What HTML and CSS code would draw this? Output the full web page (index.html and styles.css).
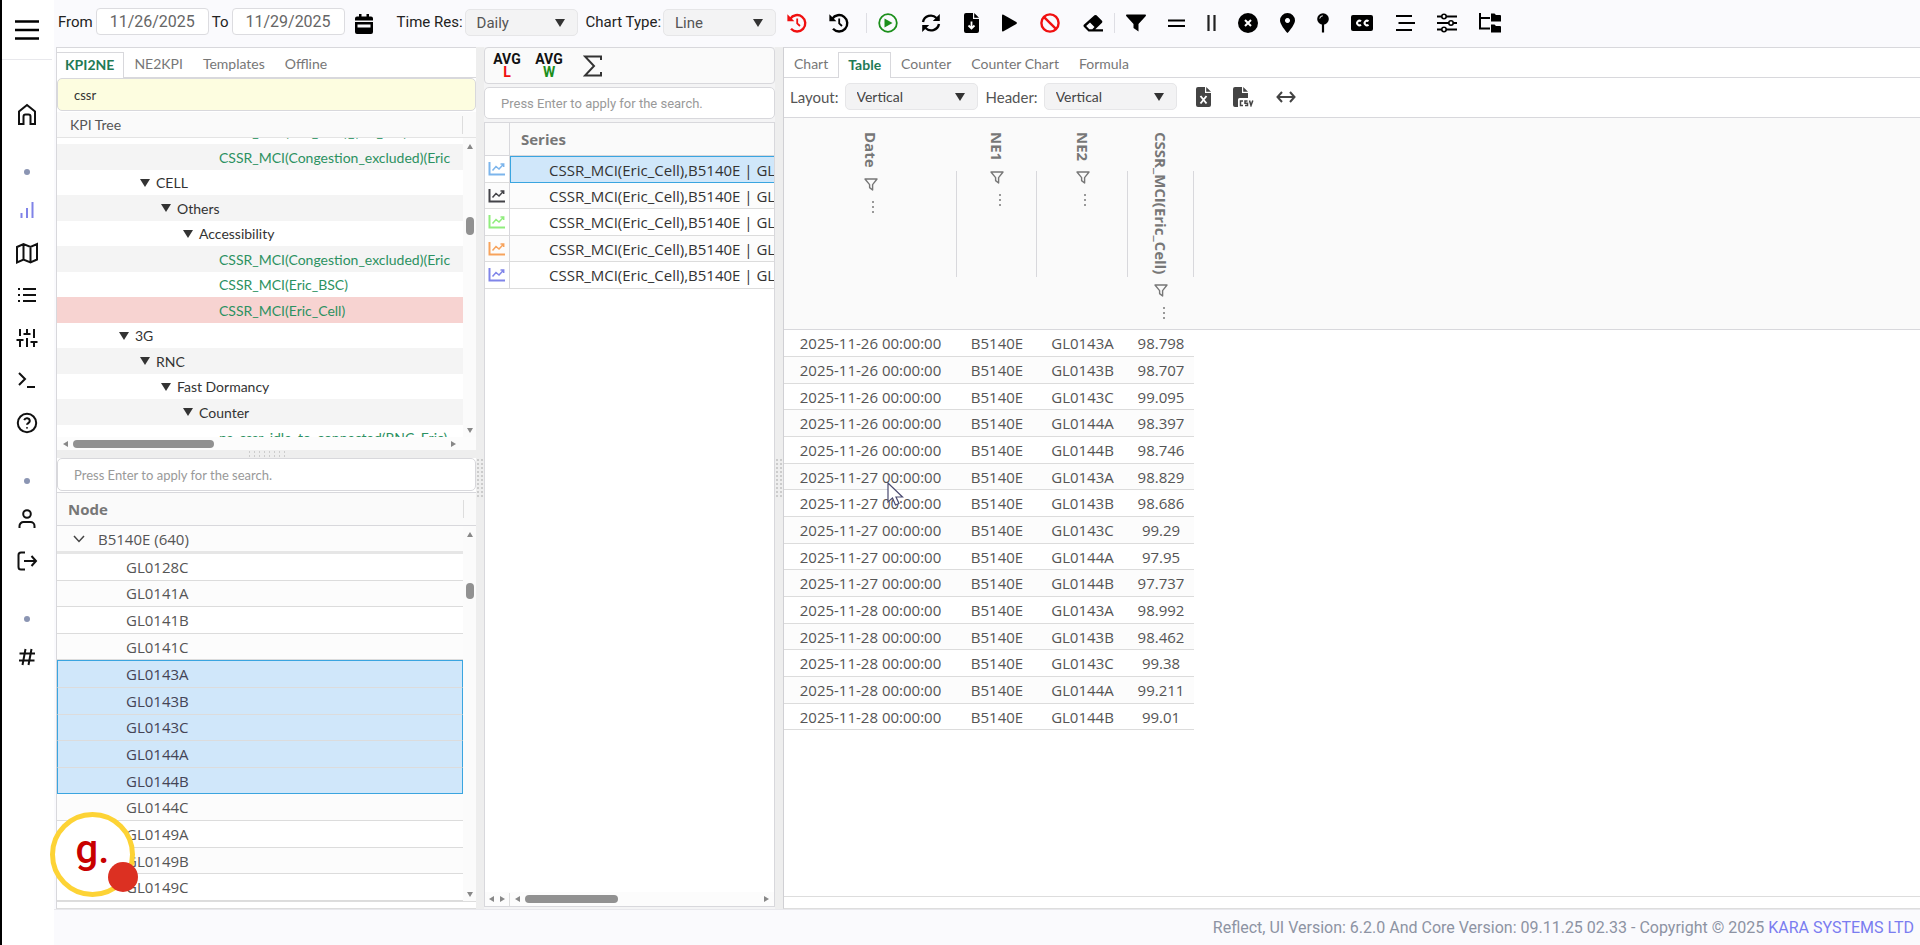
FILE: index.html
```html
<!DOCTYPE html>
<html lang="en">
<head>
<meta charset="utf-8">
<title>Reflect</title>
<link rel="stylesheet" href="styles.css">
</head>
<body>
<svg class="defs" aria-hidden="true">
  <symbol id="history" viewBox="0 0 20 20"><path d="M3.2 5.8A8.2 8.2 0 1 1 4 15.8" fill="none" stroke="currentColor" stroke-width="2.4"/><path d="M.4 1.2V8.2H7.4Z" fill="currentColor"/><path d="M10.2 5.4V10.4L13 13" fill="none" stroke="currentColor" stroke-width="1.8"/></symbol>
  <symbol id="chart" viewBox="0 0 18 16"><path d="M1.5 1V13.5H17" fill="none" stroke="currentColor" stroke-width="2"/><path d="M4.500 9.500L8 5.500L11 8L15.500 3.200M12.500 3H15.700V6" fill="none" stroke="currentColor" stroke-width="1.500"/></symbol>
  <symbol id="funnel" viewBox="0 0 14 13"><path d="M1 1H13L8.6 6.6V12L5.6 9.6V6.6Z" fill="none" stroke="currentColor" stroke-width="1.4" stroke-linejoin="round"/></symbol>
  <symbol id="file" viewBox="0 0 15 20"><path d="M2 0H9V6H15V18A2 2 0 0 1 13 20H2A2 2 0 0 1 0 18V2A2 2 0 0 1 2 0ZM10.2 0L15 4.8H10.2Z" fill="currentColor"/></symbol>
</svg>
<div class="app">
  <nav class="side" aria-label="Main">
    <button class="menu" aria-label="Menu"><svg width="24" height="20" viewBox="0 0 24 20"><path d="M0 1.5H24M0 10H24M0 18.5H24" stroke="#000" stroke-width="2.4"/></svg></button>
    <a class="item first" href="#" aria-label="Home"><svg width="24" height="24" viewBox="0 0 24 24"><path d="M4 22V9.5L12 3L20 9.5V22H15.5V14.5A2 2 0 0 0 13.5 12.5H10.5A2 2 0 0 0 8.5 14.5V22Z"/></svg></a>
    <span class="dot"></span>
    <div class="items">
      <a class="item active" href="#" aria-label="Charts"><svg width="24" height="24" viewBox="0 0 24 24"><path d="M6.5 15V20M12 10V20M17.5 4V20"/></svg></a>
      <a class="item" href="#" aria-label="Map"><svg width="24" height="24" viewBox="0 0 24 24"><path d="M2 6L8.5 3L15.5 6L22 3V18.5L15.5 21.5L8.5 18.5L2 21.5ZM8.5 3V18.5M15.5 6V21.5"/></svg></a>
      <a class="item" href="#" aria-label="List"><svg width="24" height="24" viewBox="0 0 24 24"><path d="M8 6H21M8 12H21M8 18H21M3 6H5M3 12H5M3 18H5"/></svg></a>
      <a class="item" href="#" aria-label="Settings"><svg width="24" height="24" viewBox="0 0 24 24"><path d="M5 3V10M5 14V21M12 3V8M12 12V21M19 3V12M19 16V21M1.5 14H8.5M8.5 8H15.5M15.5 16H22.5"/></svg></a>
      <a class="item" href="#" aria-label="Terminal"><svg width="24" height="24" viewBox="0 0 24 24"><path d="M4 5L10 11L4 17M12 19H20"/></svg></a>
      <a class="item" href="#" aria-label="Help"><svg width="24" height="24" viewBox="0 0 24 24"><circle cx="12" cy="12" r="9.2"/><path d="M9.2 9.2A2.9 2.9 0 0 1 14.8 10C14.8 12 12 12.2 12 13.8M12 16.2V17.4"/></svg></a>
    </div>
    <span class="dot"></span>
    <a class="item" href="#" aria-label="User"><svg width="24" height="24" viewBox="0 0 24 24"><circle cx="12" cy="7" r="3.8"/><path d="M4.5 21V19A4 4 0 0 1 8.5 15H15.5A4 4 0 0 1 19.500 19V21"/></svg></a>
    <a class="item" href="#" aria-label="Log out"><svg width="24" height="24" viewBox="0 0 24 24"><path d="M10 3.500H6A2.500 2.500 0 0 0 3.500 6V18A2.500 2.500 0 0 0 6 20.500H10M9 12H21M16.500 7L21 12L16.500 17"/></svg></a>
    <span class="dot"></span>
    <a class="item" href="#" aria-label="Channels"><svg width="24" height="24" viewBox="0 0 24 24"><path d="M4.500 8.500H20M4 15.500H19.500M10.500 4L7.500 20M16.500 4L13.500 20"/></svg></a>
  </nav>

  <div class="page">
    <header class="top">
      <label for="from">From</label><input id="from" class="date" value="11/26/2025">
      <label for="to">To</label><input id="to" class="date" value="11/29/2025">
      <button class="cal" aria-label="Calendar"><svg width="18" height="20" viewBox="0 0 18 20"><path d="M2 2.500H4V0H6.500V2.500H11.500V0H14V2.500H16A2 2 0 0 1 18 4.500V6.500H0V4.500A2 2 0 0 1 2 2.500ZM0 8H18V18A2 2 0 0 1 16 20H2A2 2 0 0 1 0 18ZM2.500 10.500V13.500H15.500V10.500Z" fill-rule="evenodd"/></svg></button>
      <label for="res">Time Res:</label><span class="pick wide"><select id="res"><option>Daily</option></select><i></i></span>
      <label class="ct" for="type">Chart Type:</label><span class="pick wide"><select id="type"><option>Line</option></select><i></i></span>
      <div class="tools hist">
        <button class="red" aria-label="Reset history"><svg width="20" height="20"><use href="#history"/></svg></button>
        <button aria-label="History"><svg width="20" height="20"><use href="#history"/></svg></button>
      </div>
      <div class="tools run">
        <button class="green" aria-label="Run"><svg width="20" height="20" viewBox="0 0 20 20"><circle cx="10" cy="10" r="8.800" fill="none" stroke="currentColor" stroke-width="1.800"/><path d="M6.500 5.500L14.500 10L6.500 14.500Z"/></svg></button>
        <button aria-label="Refresh"><svg width="20" height="20" viewBox="0 0 20 20"><path d="M2 9A8 8 0 0 1 15.500 5M18 11A8 8 0 0 1 4.500 15" fill="none" stroke="currentColor" stroke-width="2.400"/><path d="M18.800 1V8H11.800ZM1.200 19V12H8.200Z"/></svg></button>
        <button aria-label="Download"><svg width="15" height="20" viewBox="0 0 15 20"><use href="#file"/><path d="M7.500 8.500V15M4.500 12.500L7.500 15.500L10.500 12.500" fill="none" stroke="#fff" stroke-width="1.800"/></svg></button>
        <button aria-label="Play"><svg width="15" height="20" viewBox="0 0 15 20"><path d="M0 2.500Q0 1 1.500 1.800L14.300 9Q15.500 10 14.300 11L1.500 18.200Q0 19 0 17.500Z"/></svg></button>
        <button class="red" aria-label="Stop"><svg width="20" height="20" viewBox="0 0 20 20"><path d="M3.800 3.800L16.200 16.200" stroke="currentColor" stroke-width="2.400"/><circle cx="10" cy="10" r="8.600" fill="none" stroke="currentColor" stroke-width="2.400"/></svg></button>
        <button aria-label="Erase"><svg width="20" height="20" viewBox="0 0 20 20"><path d="M11.500 2.300Q12.500 1.500 13.500 2.300L19 7.800Q19.800 8.800 19 9.800L12.300 16.200H20V18.500H5.500L.8 13.800Q0 12.800.8 11.800ZM7 9.500L3.200 13L6.300 16.200H9.300L11.500 14Z" fill-rule="evenodd"/></svg></button>
      </div>
      <div class="tools view">
        <button aria-label="Filter"><svg width="20" height="20" viewBox="0 0 20 20"><path d="M.8 1.500H19.200Q20.500 1.800 19.600 3.200L12.500 11V18.500L7.500 15V11L.4 3.200Q-.5 1.800.8 1.500Z"/></svg></button>
        <button aria-label="Rows"><svg width="17" height="20" viewBox="0 0 17 20"><path d="M0 7.500H17M0 13H17" stroke="#000" stroke-width="2.200"/></svg></button>
        <button aria-label="Columns"><svg width="9" height="20" viewBox="0 0 9 20"><path d="M1.500 2V18M7.500 2V18" stroke="#222" stroke-width="2.200"/></svg></button>
        <button aria-label="Clear"><svg width="20" height="20" viewBox="0 0 20 20"><circle cx="10" cy="10" r="10"/><path d="M7 7L13 13M13 7L7 13" stroke="#fff" stroke-width="2"/></svg></button>
        <button aria-label="Location"><svg width="15" height="20" viewBox="0 0 15 20"><path d="M7.500 0A7.500 7.500 0 0 1 15 7.500C15 11 10 17.500 7.500 20C5 17.500 0 11 0 7.500A7.500 7.500 0 0 1 7.500 0ZM7.500 5A2.500 2.500 0 1 0 7.510 5Z" fill-rule="evenodd"/></svg></button>
        <button aria-label="Pin"><svg width="12" height="20" viewBox="0 0 12 20"><circle cx="6" cy="6" r="5.800"/><path d="M6 11V19.500" stroke="#000" stroke-width="2.200"/><path d="M2.800 5.500A3 3 0 0 1 5.800 2.800" fill="none" stroke="#fff"/></svg></button>
        <button aria-label="Captions"><svg width="22" height="20" viewBox="0 0 22 20"><rect y="2" width="22" height="16" rx="2"/><path d="M10 8.300A2.300 2.300 0 1 0 10 11.700M17.500 8.300A2.300 2.300 0 1 0 17.500 11.700" fill="none" stroke="#fff" stroke-width="2"/></svg></button>
        <button aria-label="Align"><svg width="20" height="20" viewBox="0 0 20 20"><path d="M1 3H17M3.500 10H20M1 17H17" stroke="#000" stroke-width="2.200"/></svg></button>
        <button aria-label="Sliders"><svg width="20" height="20" viewBox="0 0 20 20"><path d="M0 3.500H20M0 10H20M0 16.500H20" stroke="#000" stroke-width="2"/><g fill="#fff" stroke="#000" stroke-width="1.600"><circle cx="7" cy="3.500" r="2.200"/><circle cx="14" cy="10" r="2.200"/><circle cx="7" cy="16.500" r="2.200"/></g></svg></button>
        <button aria-label="Tree"><svg width="22" height="20" viewBox="0 0 22 20"><path d="M1 0V15.500H11M1 5H11" fill="none" stroke="#000" stroke-width="2"/><path d="M12 .5H15.500L17 2H21Q22 2 22 3V8.500H12ZM12 11.500H15.500L17 13H21Q22 13 22 14V19.500H12Z"/></svg></button>
      </div>
    </header>

    <main class="work">
      <section class="left">
        <div class="tabs" role="tablist">
          <button class="tab on" role="tab">KPI2NE</button><button class="tab" role="tab">NE2KPI</button><button class="tab" role="tab">Templates</button><button class="tab" role="tab">Offline</button>
        </div>
        <input class="search kpi" aria-label="KPI search" value="cssr">
        <div class="treehead"><span>KPI Tree</span></div>
        <div class="treebox">
          <ul class="tree">
            <li class="leaf cut">CSSR_MCI(Eric_BSC)_(2G_cell)</li>
            <li class="leaf">CSSR_MCI(Congestion_excluded)(Eric</li>
            <li class="l2"><i></i>CELL</li>
            <li class="l3"><i></i>Others</li>
            <li class="l4"><i></i>Accessibility</li>
            <li class="leaf">CSSR_MCI(Congestion_excluded)(Eric</li>
            <li class="leaf">CSSR_MCI(Eric_BSC)</li>
            <li class="leaf picked">CSSR_MCI(Eric_Cell)</li>
            <li class="l1"><i></i>3G</li>
            <li class="l2"><i></i>RNC</li>
            <li class="l3"><i></i>Fast Dormancy</li>
            <li class="l4"><i></i>Counter</li>
            <li class="leaf">ps_cssr_idle_to_connected(RNC_Eric)</li>
          </ul>
          <div class="vbar"><b class="up"></b><b class="thumb a"></b><b class="down"></b></div>
        </div>
        <div class="hbar"><b class="lt"></b><b class="thumb h1"></b><b class="rt"></b></div>
        <div class="split"><span class="grip"></span></div>
        <input class="search" aria-label="Node search" placeholder="Press Enter to apply for the search.">
        <div class="nodehead"><span>Node</span></div>
        <div class="nodebox">
          <div class="nodes">
            <div class="group"><svg width="12" height="8" viewBox="0 0 12 8"><path d="M1 1L6 6.500L11 1" fill="none" stroke="#444" stroke-width="1.500"/></svg>B5140E (640)</div>
            <ul class="list">
              <li>GL0128C</li><li>GL0141A</li><li>GL0141B</li><li>GL0141C</li>
              <li class="sel start">GL0143A</li><li class="sel">GL0143B</li><li class="sel">GL0143C</li><li class="sel">GL0144A</li><li class="sel end">GL0144B</li>
              <li>GL0144C</li><li>GL0149A</li><li>GL0149B</li><li>GL0149C</li>
            </ul>
          </div>
          <div class="vbar"><b class="up"></b><b class="thumb b"></b><b class="down"></b></div>
        </div>
      </section>
      <div class="gutter"><span class="vgrip"></span></div>
      <section class="mid">
        <div class="avgs">
          <button class="avg">AVG<em class="red">L</em></button>
          <button class="avg">AVG<em class="green">W</em></button>
          <button class="sum" aria-label="Sum"><svg width="20" height="22" viewBox="0 0 20 22"><path d="M18 5V1.500H2L11 11L2 20.500H18V17" fill="none" stroke="#333" stroke-width="2"/></svg></button>
        </div>
        <input class="search" aria-label="Series search" placeholder="Press Enter to apply for the search.">
        <div class="seriesbox">
          <table class="series">
            <thead><tr><th class="ic"></th><th>Series</th></tr></thead>
            <tbody>
              <tr><td class="ic c1"><svg width="18" height="16"><use href="#chart"/></svg></td><td class="cur">CSSR_MCI(Eric_Cell),B5140E | GL</td></tr>
              <tr><td class="ic c2"><svg width="18" height="16"><use href="#chart"/></svg></td><td>CSSR_MCI(Eric_Cell),B5140E | GL</td></tr>
              <tr><td class="ic c3"><svg width="18" height="16"><use href="#chart"/></svg></td><td>CSSR_MCI(Eric_Cell),B5140E | GL</td></tr>
              <tr><td class="ic c4"><svg width="18" height="16"><use href="#chart"/></svg></td><td>CSSR_MCI(Eric_Cell),B5140E | GL</td></tr>
              <tr><td class="ic c5"><svg width="18" height="16"><use href="#chart"/></svg></td><td>CSSR_MCI(Eric_Cell),B5140E | GL</td></tr>
            </tbody>
          </table>
          <div class="hbar foot"><span class="mini"><b class="lt"></b><b class="rt"></b></span><b class="lt"></b><b class="thumb h2"></b><b class="rt"></b></div>
        </div>
      </section>
      <div class="gutter"><span class="vgrip"></span></div>
      <section class="right">
        <div class="tabs" role="tablist">
          <button class="tab" role="tab">Chart</button><button class="tab on" role="tab">Table</button><button class="tab" role="tab">Counter</button><button class="tab" role="tab">Counter Chart</button><button class="tab" role="tab">Formula</button>
        </div>
        <div class="opts">
          <label for="layout">Layout:</label><span class="pick"><select id="layout"><option>Vertical</option></select><i></i></span>
          <label class="hd" for="head">Header:</label><span class="pick"><select id="head"><option>Vertical</option></select><i></i></span>
          <button class="xl" aria-label="Export Excel"><svg width="15" height="20" viewBox="0 0 15 20"><use href="#file"/><path d="M4.500 9L10.500 16.500M10.500 9L4.500 16.500" stroke="#fff" stroke-width="1.900"/></svg></button>
          <button class="csv" aria-label="Export CSV"><svg width="21" height="20" viewBox="0 0 21 20"><path d="M2 0H9V6H15V11H6.500Q5 11 5 12.500V20H2A2 2 0 0 1 0 18V2A2 2 0 0 1 2 0ZM10.200 0L15 4.800H10.200Z"/><path d="M10 14H7.500V18.500H10M14.500 14H12V16.200H14.500V18.500H12M16.500 13.500L18 18.500L19.800 13.500" fill="none" stroke="currentColor" stroke-width="1.500"/></svg></button>
          <button class="fit" aria-label="Fit width"><svg width="20" height="12" viewBox="0 0 20 12"><path d="M1.500 6H18.500M6 1L1.500 6L6 11M14 1L18.500 6L14 11" fill="none" stroke="currentColor" stroke-width="2"/></svg></button>
        </div>
        <div class="gridbox">
          <table class="data">
            <colgroup><col class="w1"><col class="w2"><col class="w3"><col class="w4"><col></colgroup>
            <thead><tr>
              <th><div><span>Date</span><svg width="14" height="13"><use href="#funnel"/></svg><u></u></div></th>
              <th><div><span>NE1</span><svg width="14" height="13"><use href="#funnel"/></svg><u></u></div></th>
              <th><div><span>NE2</span><svg width="14" height="13"><use href="#funnel"/></svg><u></u></div></th>
              <th><div><span>CSSR_MCI(Eric_Cell)</span><svg width="14" height="13"><use href="#funnel"/></svg><u></u></div></th>
              <td></td>
            </tr></thead>
            <tbody>
              <tr><td>2025-11-26 00:00:00</td><td>B5140E</td><td>GL0143A</td><td>98.798</td></tr>
              <tr><td>2025-11-26 00:00:00</td><td>B5140E</td><td>GL0143B</td><td>98.707</td></tr>
              <tr><td>2025-11-26 00:00:00</td><td>B5140E</td><td>GL0143C</td><td>99.095</td></tr>
              <tr><td>2025-11-26 00:00:00</td><td>B5140E</td><td>GL0144A</td><td>98.397</td></tr>
              <tr><td>2025-11-26 00:00:00</td><td>B5140E</td><td>GL0144B</td><td>98.746</td></tr>
              <tr><td>2025-11-27 00:00:00</td><td>B5140E</td><td>GL0143A</td><td>98.829</td></tr>
              <tr><td>2025-11-27 00:00:00</td><td>B5140E</td><td>GL0143B</td><td>98.686</td></tr>
              <tr><td>2025-11-27 00:00:00</td><td>B5140E</td><td>GL0143C</td><td>99.29</td></tr>
              <tr><td>2025-11-27 00:00:00</td><td>B5140E</td><td>GL0144A</td><td>97.95</td></tr>
              <tr><td>2025-11-27 00:00:00</td><td>B5140E</td><td>GL0144B</td><td>97.737</td></tr>
              <tr><td>2025-11-28 00:00:00</td><td>B5140E</td><td>GL0143A</td><td>98.992</td></tr>
              <tr><td>2025-11-28 00:00:00</td><td>B5140E</td><td>GL0143B</td><td>98.462</td></tr>
              <tr><td>2025-11-28 00:00:00</td><td>B5140E</td><td>GL0143C</td><td>99.38</td></tr>
              <tr><td>2025-11-28 00:00:00</td><td>B5140E</td><td>GL0144A</td><td>99.211</td></tr>
              <tr><td>2025-11-28 00:00:00</td><td>B5140E</td><td>GL0144B</td><td>99.01</td></tr>
            </tbody>
          </table>
        </div>
      </section>
    </main>
    <footer class="bottom">Reflect, UI Version: 6.2.0 And Core Version: 09.11.25 02.33 - Copyright © 2025&nbsp;<a href="#">KARA SYSTEMS LTD</a></footer>
  </div>
</div>
<div class="badge">g.<span></span></div>
<svg class="cursor" width="18" height="26" viewBox="0 0 18 26"><path d="M1 1V20L5.500 16L8.500 23L12 21.500L9 15H15.500Z" fill="#fff" stroke="#4a4a70" stroke-width="1.200"/></svg>
</body>
</html>
```
FILE: styles.css
```css
* { box-sizing: border-box; }
body { margin: 0; height: 100vh; overflow: hidden; background: #fafafd; font-family: "Open Sans", "Noto Sans", sans-serif; font-size: 15px; color: #555; }
button { border: 0; background: none; padding: 0; font: inherit; color: inherit; display: flex; align-items: center; justify-content: center; }
input, select { font: inherit; color: inherit; min-width: 0; }
ul { list-style: none; margin: 0; padding: 0; }
svg { display: block; flex: none; fill: currentColor; }
.defs { position: absolute; width: 0; height: 0; }
.app { display: flex; height: 100%; }

.side { width: 54px; flex: none; background: #fff; border-left: 2px solid #000; padding-right: 2px; display: flex; flex-direction: column; color: #111; }
.menu { height: 60px; flex: none; border-bottom: 1px solid #e8e8ec; }
.item { height: 42px; display: flex; align-items: center; justify-content: center; color: inherit; }
.item svg { fill: none; stroke: currentColor; stroke-width: 2; }
.first { margin-top: 33px; }
.items { height: 255px; display: flex; flex-direction: column; }
.items .item { flex: 1; height: auto; }
.item.active { color: #8083e8; }
.dot { height: 54px; padding-top: 20px; display: flex; align-items: center; justify-content: center; }
.dot::before { content: ""; width: 6px; height: 6px; border-radius: 50%; background: #8b95b3; }

.page { flex: 1; min-width: 0; display: flex; flex-direction: column; }
.top { height: 47px; flex: none; display: flex; align-items: center; padding: 0 0 4px 4px; font-family: Roboto, sans-serif; color: #222; white-space: nowrap; }
.date { width: 113px; height: 27px; margin: 0 3px; border: 1px solid #dcdce0; border-radius: 4px; background: #fff; text-align: center; color: #666; padding: 0; font-size: 16px; }
.cal { margin: 4px 24px 0 7px; color: #000; }
.pick { display: grid; width: 133px; height: 27px; margin-left: 4px; }
.pick.wide { width: 113px; margin: 2px 0 0 2px; color: #555; }
.pick > * { grid-area: 1 / 1; }
.pick select { appearance: none; border: 1px solid #e6e6e8; border-radius: 5px; background: #f3f3f4; padding: 0 11px; width: 100%; }
.pick i { justify-self: end; align-self: center; margin-right: 13px; border: 5px solid transparent; border-top: 8px solid #333; border-bottom: 0; pointer-events: none; }
.ct { margin-left: 8px; }
.tools { display: flex; gap: 22px; height: 20px; color: #000; }
.hist { margin-left: 11px; padding-right: 17px; }
.run, .view { border-left: 1px solid #dedee4; padding: 0 11px; }
.run { gap: 23px; }
.run, .view, .hist { margin-top: 3px; }
.red { color: #f01010; }
.green { color: #1b8f1b; }

.work { flex: 1; min-height: 0; display: flex; padding-left: 2px; }
.left, .mid, .right { display: flex; flex-direction: column; min-width: 0; border-top: 1px solid #d8d8dc; background: #fff; }
.left { width: 420px; flex: none; border-left: 1px solid #d8d8dc; border-bottom: 1px solid #ddd; }
.right { flex: 1; border-left: 1px solid #d0d0d4; border-bottom: 1px solid #ddd; }
.mid { width: 291px; flex: none; background: #f4f4f5; border: 0; gap: 3px; }
.gutter { width: 8px; flex: none; background: #eee; display: flex; align-items: center; justify-content: center; }
.vgrip { width: 8px; height: 40px; background: radial-gradient(circle, #ccc 1px, transparent 1px) 0 0 / 4px 4px; }

.tabs { display: flex; padding-top: 4px; height: 30px; border-bottom: 1px solid #d8d8dc; font-family: Lato, sans-serif; font-size: 14px; flex: none; }
.tab { padding: 0 9px 3px; height: 25px; color: #777; border: 1px solid transparent; border-bottom: 0; }
.tab.on { color: #1f7a55; font-weight: 700; height: 26px; border-color: #d8d8dc; background: #fff; }
.left .tab.on { border-left: 0; padding-left: 8px; }
.search { width: 100%; height: 33px; flex: none; border: 1px solid #d8d8dc; border-radius: 5px; background: #fff; padding: 0 16px; font-family: Lato, sans-serif; font-size: 13px; }
.search::placeholder { color: #999; }
.search.kpi { background: #fdfde0; color: #333; }
.mid .search { height: 32px; font-family: Roboto, sans-serif; }
.treehead, .nodehead { flex: none; background: #fafafa; border-bottom: 1px solid #e4e4e4; margin-top: 1px; display: flex; align-items: center; }
.treehead { height: 26px; padding: 0 13px; font-family: Lato, sans-serif; font-size: 14px; }
.treehead::after, .nodehead::after { content: ""; margin-left: auto; width: 1px; height: 18px; background: #ddd; }
.nodehead { height: 34px; padding: 0 12px 0 11px; font-weight: 700; color: #777; border-top: 1px solid #ddd; border-color: #d8d8dc; }
.treebox { height: 299px; flex: none; display: flex; overflow: hidden; }
.tree { flex: 1; min-width: 0; overflow: hidden; font-family: Lato, sans-serif; font-size: 14px; color: #333; }
.tree li { height: 25px; line-height: 25px; white-space: nowrap; overflow: hidden; display: flex; align-items: center; }
.tree li:nth-child(even) { background: #f4f4f4; height: 26px; }
.tree li i { border: 5px solid transparent; border-top: 8px solid #333; border-bottom: 0; margin-right: 6px; }
.tree li.cut { height: 6px; align-items: flex-end; }
.tree li.leaf { color: #2c9161; padding-left: 162px; }
.tree li.picked { background: #f7d3d1; }
.l1 { padding-left: 62px; }
.l2 { padding-left: 83px; }
.l3 { padding-left: 104px; }
.l4 { padding-left: 126px; }
.vbar { width: 13px; flex: none; background: #fbfbfb; display: flex; flex-direction: column; align-items: center; padding: 6px 0 4px; }
.up, .down, .lt, .rt { width: 0; height: 0; border: 3px solid transparent; }
.up { border-top: 0; border-bottom: 5px solid #888; }
.down { border-bottom: 0; border-top: 5px solid #888; margin-top: auto; }
.lt { border-left: 0; border-right: 5px solid #888; }
.rt { border-right: 0; border-left: 5px solid #888; }
.thumb { background: #919191; border-radius: 4px; }
.thumb.a { width: 8px; height: 18px; margin-top: 68px; }
.thumb.b { width: 8px; height: 16px; margin-top: 46px; }
.hbar { height: 13px; flex: none; display: flex; align-items: center; background: #fcfcfc; padding: 0 20px 0 6px; }
.hbar > .rt { margin-left: auto; }
.h1 { width: 141px; height: 8px; margin-left: 5px; }
.h2 { width: 93px; height: 8px; margin-left: 5px; }
.split { height: 8px; flex: none; background: #eee; display: flex; justify-content: center; }
.grip { width: 40px; height: 8px; background: radial-gradient(circle, #ccc 1px, transparent 1px) 0 0 / 5px 4px; }

.nodebox { flex: 1; min-height: 0; display: flex; margin-bottom: 6px; border-bottom: 1px solid #ddd; }
.nodes { flex: 1; display: flex; flex-direction: column; }
.group { height: 28px; flex: none; display: flex; align-items: center; gap: 13px; padding-left: 16px; background: #fcfcfc; border-bottom: 3px solid #e6e6e6; }
.list { flex: 1; display: flex; flex-direction: column; }
.list li { flex: 1; display: flex; align-items: center; padding-left: 69px; border-bottom: 1px solid #dcdcdc; }
.list li:nth-child(even) { background: #fcfcfc; }
.list li.sel { background: #d0e7fa; border-left: 1px solid #3aa5e0; border-right: 1px solid #3aa5e0; padding-left: 68px; color: #445; }
.list li.start { border-top: 1px solid #3aa5e0; }
.list li.end { border-bottom-color: #3aa5e0; }

.avgs { height: 37px; flex: none; border: 1px solid #d8d8dc; border-radius: 4px; background: #fafafa; display: flex; padding-left: 8px; gap: 14px; }
.avg { flex-direction: column; width: 28px; font: 700 14px/13px Roboto, sans-serif; color: #111; }
.avg em { font-style: normal; }
.sum { margin-left: 6px; }
.seriesbox { flex: 1; min-height: 0; border: 1px solid #d8d8dc; background: #fff; display: flex; flex-direction: column; overflow: hidden; margin-bottom: 2px; }
.series { border-collapse: separate; border-spacing: 0; table-layout: fixed; width: 100%; line-height: 20px; }
.series th { height: 33px; background: #fafafa; text-align: left; padding: 0 11px; color: #777; border-bottom: 1px solid #d8d8dc; }
.series td { height: 27px; padding: 0 0 0 39px; border-bottom: 1px solid #dcdcdc; white-space: nowrap; overflow: hidden; color: #333; }
.series .ic { width: 25px; padding: 0 3px; border-right: 1px solid #d8d8dc; }
.series tr:nth-child(even) td { background: #fcfcfc; height: 26px; }
.series .cur { background: #d0e7fa; border: 1px solid #3aa5e0; border-right: 0; padding-left: 38px; }
.series .c1 { color: #7cb5ec; }
.series .c2 { color: #434348; }
.series .c3 { color: #90ed7d; }
.series .c4 { color: #f7a35c; }
.series .c5 { color: #8085e9; }
.foot { margin-top: auto; padding: 0 5px 0 0; height: 14px; }
.mini { width: 25px; height: 13px; display: flex; align-items: center; justify-content: space-between; padding: 0 4px; border-right: 1px solid #ddd; margin-right: 5px; }

.opts { height: 40px; flex: none; display: flex; align-items: center; padding: 0 0 2px 6px; font-family: Lato, sans-serif; border-bottom: 1px solid #d8d8dc; }
.opts .pick { margin-left: 6px; font-size: 14px; color: #444; }
.hd { margin-left: 8px; }
.xl { margin-left: 19px; }
.csv { margin-left: 22px; }
.fit { margin-left: 22px; }
.opts button { color: #444; }
.gridbox { flex: 1; min-height: 0; margin-bottom: 11px; border-bottom: 1px solid #ddd; }
.data { width: 100%; table-layout: fixed; border-collapse: separate; border-spacing: 0; }
.w1 { width: 173px; }
.w2 { width: 80px; }
.w3 { width: 91px; }
.w4 { width: 66px; }
.data thead th, .data thead td { background: #fafafa; height: 212px; border-bottom: 1px solid #d8d8dc; }
.data thead th { padding: 14px 0 0; vertical-align: top; color: #777; background: linear-gradient(#d8d8dc, #d8d8dc) right center / 1px 106px no-repeat #fafafa; }
.data th div { display: flex; flex-direction: column; align-items: center; }
.data th span { writing-mode: vertical-rl; line-height: 20px; }
.data th svg { margin: 10px 0 9px; }
.data u { width: 3px; height: 15px; margin-left: 6px; background: linear-gradient(#999 2px, transparent 2px) 0 1px / 2px 5px repeat-y; }
.data tbody td { height: 27px; padding: 0; text-align: center; border-bottom: 1px solid #dcdcdc; line-height: 20px; }
.data tbody tr:nth-child(3n) td { height: 26px; }
.data tbody tr:nth-child(even) td { background: #fcfcfc; }

.bottom { height: 36px; flex: none; display: flex; align-items: center; justify-content: flex-end; padding: 0 6px 0 0; border-top: 1px solid #e8e8ec; font-family: Roboto, sans-serif; font-size: 16px; color: #8d93a3; }
.bottom a { color: #7a7df0; text-decoration: none; }
.badge { position: absolute; left: 50px; bottom: 48px; width: 85px; height: 85px; border: 5px solid #fdd335; border-radius: 50%; background: #fff; color: #c80000; font: 500 40px/66px Roboto, sans-serif; text-align: center; }
.badge span { position: absolute; right: -8px; bottom: 0; width: 30px; height: 30px; border-radius: 50%; background: #dc3022; }
.cursor { position: absolute; left: 887px; top: 482px; }
```
